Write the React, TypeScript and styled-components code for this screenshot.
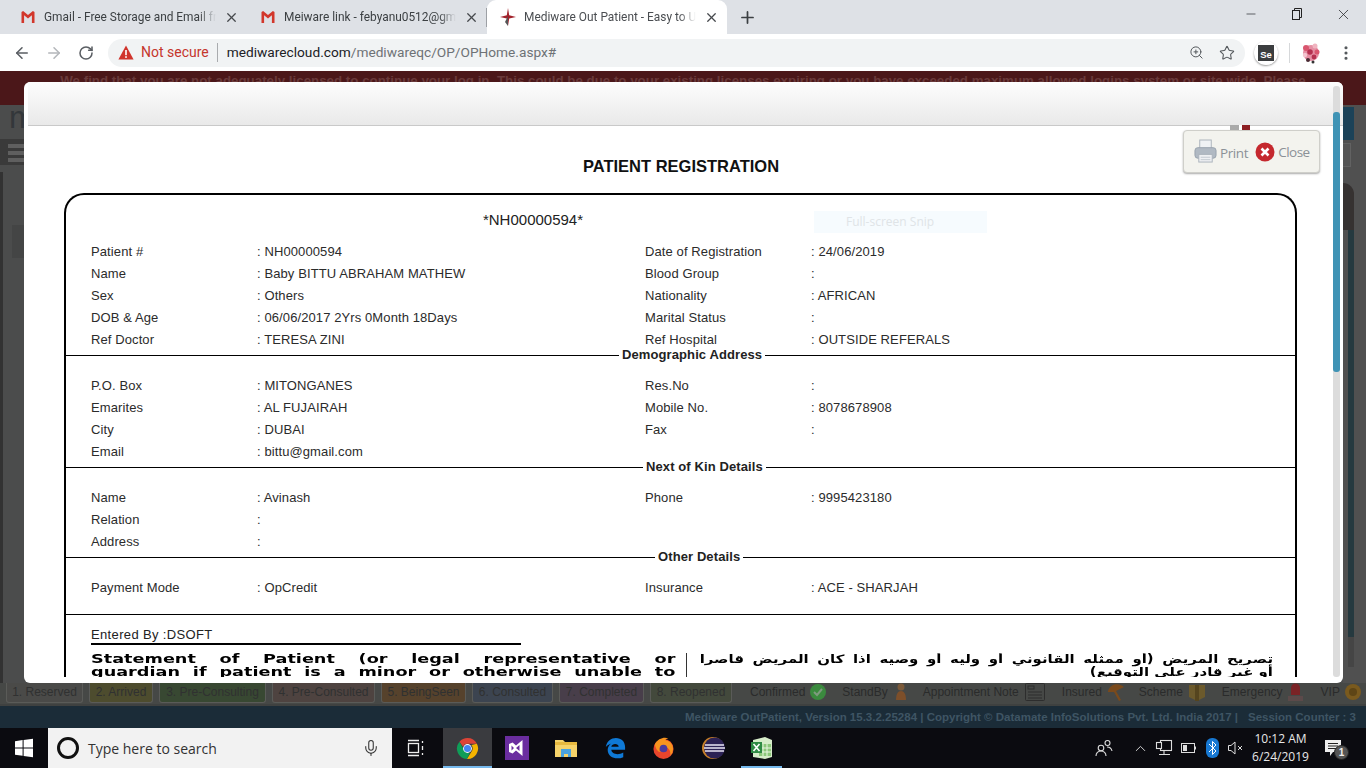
import React from "react";
import styled, { createGlobalStyle } from "styled-components";
import { ArrowLeft, ArrowRight, RotateCw, Plus, X, Minus, Star, ZoomIn, Mic, ChevronUp, MoreVertical } from "lucide-react";

const Global = createGlobalStyle`
  html, body { margin: 0; padding: 0; background: #000; overflow: hidden; }
  * { box-sizing: border-box; }
`;

const Screen = styled.div`
  width: 1366px; height: 768px; display: flex; flex-direction: column; overflow: hidden; position: relative;
  font-family: "Liberation Sans", Arial, sans-serif;
`;

/* ---------- browser chrome ---------- */
const TabStrip = styled.div`
  height: 34px; flex: none; background: #dee1e6; display: flex; align-items: stretch; padding-left: 7px;
`;
const Tab = styled.div<{ $active?: boolean; $sep?: boolean }>`
  width: 240px; display: flex; align-items: center; padding: 0 8px 0 13px; gap: 8px; position: relative;
  font: 11.9px Roboto, sans-serif; color: ${p => (p.$active ? "#4a4d51" : "#3c4043")};
  background: ${p => (p.$active ? "#fff" : "transparent")};
  border-radius: ${p => (p.$active ? "9px 9px 0 0" : "0")};
  ${p => p.$sep && `&::after { content: ""; position: absolute; right: 0; top: 8px; height: 19px; width: 1px; background: #9da0a5; }`}
`;
const TabTitle = styled.span`
  flex: 1; min-width: 0; white-space: nowrap;
  -webkit-mask-image: linear-gradient(90deg, #000 90%, transparent 100%);
  mask-image: linear-gradient(90deg, #000 90%, transparent 100%);
`;
const NewTab = styled.div`
  width: 28px; margin-left: 6px; display: flex; align-items: center; justify-content: center; color: #3c4043;
`;
const WindowControls = styled.div`
  margin-left: auto; display: flex; align-items: flex-start;
`;
const WindowButton = styled.div`
  width: 46px; height: 28px; display: flex; align-items: center; justify-content: center; color: #26282b;
`;

const Toolbar = styled.div`
  height: 37px; flex: none; background: #fff; display: flex; align-items: center; padding-left: 6px;
`;
const NavButton = styled.div<{ $off?: boolean }>`
  width: 32px; display: flex; justify-content: center; color: ${p => (p.$off ? "#b4b7bb" : "#5a5e63")};
`;
const Omnibox = styled.div`
  margin-left: 6px; width: 1137px; height: 28px; border-radius: 14px; background: #f1f3f4;
  display: flex; align-items: center; padding-left: 10px; font: 13.7px/19px Roboto, sans-serif;
`;
const NotSecure = styled.span`
  color: #c5362c; margin-left: 7px; padding-right: 8px; border-right: 1px solid #a9abae; line-height: 19px; font-size: 14px;
`;
const UrlHost = styled.span`
  color: #202124; margin-left: 9px;
`;
const UrlPath = styled.span`
  color: #6e7276;
`;
const OmniIcons = styled.div`
  margin-left: auto; display: flex; align-items: center; gap: 15px; padding-right: 10px; color: #54585c;
`;
const SeBadge = styled.div`
  margin-left: 9px; width: 24px; height: 24px; border-radius: 50%; background: #fff; box-shadow: 0 1px 2px #999;
  display: flex; align-items: center; justify-content: center;
`;
const SeSquare = styled.div`
  width: 16px; height: 16px; background: #3b3d3f; color: #fff; font: bold 9.5px "Liberation Sans", sans-serif;
  display: flex; align-items: flex-end; justify-content: center; line-height: 10px; padding-bottom: 1px;
`;
const ToolDivider = styled.div`
  width: 1px; height: 20px; background: #d6d8da; margin: 0 11px;
`;
const Kebab = styled.div`
  margin-left: 16px; color: #55595d; display: flex;
`;

/* ---------- application behind the dialog (dimmed) ---------- */
const AppArea = styled.div`
  flex: 1; min-height: 0; position: relative; display: flex; flex-direction: column; background: #4b4c4c;
`;
const Banner = styled.div`
  height: 34px; flex: none; background: #4b1719; color: #6a3a3b; font: bold 13.33px "Liberation Sans", sans-serif;
  white-space: nowrap; text-align: center; padding-top: 2px; line-height: 15px; overflow: hidden;
`;
const BackRow = styled.div`
  flex: 1; min-height: 0; display: flex; justify-content: space-between;
`;
const LeftGutter = styled.div`
  width: 24px; display: flex; flex-direction: column;
`;
const LogoLetter = styled.div`
  height: 34px; color: #33373a; font: 32px/24px "Liberation Sans", sans-serif; padding-left: 9px; overflow: hidden; white-space: nowrap;
`;
const MenuBand = styled.div`
  height: 26px; background: #3a3a3a; padding: 5px 0 0 8px; display: flex; flex-direction: column; gap: 3px;
`;
const MenuLine = styled.div`
  height: 4px; background: #5f5f5f;
`;
const LeftBody = styled.div`
  flex: 1; margin-top: 7px; border-left: 3px solid #323232; padding: 53px 0 0 9px;
`;
const LeftBox = styled.div`
  height: 33px; background: #444545;
`;
const RightGutter = styled.div`
  width: 23px; display: flex; flex-direction: column; background: #505050; padding-top: 2px;
`;
const BlueBlock = styled.div`
  width: 11px; height: 33px; background: #1b4258;
`;
const GreyBlock = styled.div`
  width: 8px; height: 24px; margin-top: 3px; background: #555; border: 1px solid #626262; border-left: 0;
`;
const DarkBlock = styled.div`
  width: 11px; height: 47px; margin-top: 16px; background: #363231; border-top-right-radius: 12px;
`;
const TealBlock = styled.div`
  width: 6px; height: 407px; margin-left: 5px; background: #25393f;
`;
const GreyTail = styled.div`
  width: 6px; height: 30px; margin-left: 5px; background: #454545;
`;

const StatusBar = styled.div`
  height: 23px; flex: none; background: #464846; display: flex; align-items: flex-start; padding-left: 6px; gap: 6px;
  border-bottom: 2px solid #3f4140; overflow: hidden;
`;
const Chip = styled.div<{ $w: number; $bg: string }>`
  width: ${p => p.$w}px; height: 20px; flex: none; background: ${p => p.$bg}; border: 1px solid #5a5b58; border-top: 0;
  border-radius: 0 0 3px 3px; color: #303131; font-size: 12px; line-height: 18px; text-align: center; white-space: nowrap;
`;
const Legend = styled.div<{ $gap: number }>`
  flex: none; margin-left: ${p => p.$gap}px; display: flex; align-items: center; gap: 5px; height: 18px;
  color: #2a2b2b; font-size: 12px; white-space: nowrap;
`;
const FooterBar = styled.div`
  height: 22px; flex: none; background: #1b2c38; color: #3f5564; font: bold 11.5px/23px "Liberation Sans", sans-serif;
  display: flex; justify-content: flex-end; padding-right: 10px; gap: 10px; white-space: nowrap;
`;

/* ---------- dialog ---------- */
const Dialog = styled.div`
  position: absolute; left: 24px; top: 11px; width: 1319px; height: 601px; background: #fff; border-radius: 6px;
  overflow: hidden; display: flex; flex-direction: column; padding-bottom: 6px;
`;
const DialogHeader = styled.div`
  height: 44px; flex: none; margin-left: 4px; background: linear-gradient(#fdfdfd, #e9e9e9); border-bottom: 1px solid #c9c9c9;
`;
const ScrollTrack = styled.div`
  position: absolute; right: 3px; top: 4px; bottom: 6px; width: 7px; background: #dcdcdc; border-radius: 3px;
`;
const ScrollThumb = styled.div`
  position: absolute; left: 0; right: 0; top: 26px; height: 260px; background: #3f93b5; border-radius: 3px;
`;
const PrintCard = styled.div`
  position: absolute; left: 1159px; top: 48px; width: 137px; height: 43px; background: #f3f3ee; border: 1px solid #cfcfca;
  border-radius: 4px; box-shadow: 0 1px 2px #aaa; display: flex; align-items: center; padding-left: 10px;
  font: 13.5px "Open Sans", sans-serif; color: #8b9197;
`;
const Nub = styled.div`
  position: absolute; left: 46px; top: -6px; width: 20px; height: 5px;
  background: linear-gradient(90deg, #aaa 0 45%, #fff 45% 58%, #8d1f24 58%);
`;
const PrintLabel = styled.span`
  margin: 3px 0 0 3px; letter-spacing: -0.4px;
`;
const CloseLabel = styled.span`
  margin-left: 3px; letter-spacing: -0.5px;
`;
const CloseIcon = styled.svg`
  margin-left: 7px;
`;
const DialogBody = styled.div`
  flex: 1; min-height: 0; overflow: hidden; padding: 0 46px 0 40px; background: #fff;
`;
const Title = styled.h1`
  margin: 31px 0 0; height: 19px; width: 1234px; text-align: center; font: bold 16.5px/19px "Liberation Sans", sans-serif; color: #111;
`;
const RecordBox = styled.div`
  margin-top: 17px; width: 1233px; border: 2px solid #000; border-bottom: 0; border-radius: 20px 20px 0 0;
`;
const BarcodeRow = styled.div`
  height: 45px; display: flex; position: relative;
`;
const Barcode = styled.div`
  width: 934px; text-align: center; padding-top: 16px; font: 15px/18px "Liberation Sans", sans-serif; color: #222;
`;
const SnipHint = styled.div`
  position: absolute; left: 748px; top: 16px; width: 173px; height: 22px; background: #f6fbfe; color: #dfe4e7;
  font: 12px/22px "Open Sans", sans-serif; padding-left: 32px;
`;
const InfoGrid = styled.div`
  display: grid; grid-template-columns: 166px 388px 166px 1fr; padding-left: 25px; grid-auto-rows: 22px;
  font-size: 13px; line-height: 23px; color: #2b2b2b; letter-spacing: 0.1px;
`;
const Value = styled.div`
  white-space: nowrap;
`;
const Divider = styled.div`
  height: 10px; display: flex; align-items: center; margin-bottom: 14px;
`;
const DividerLine = styled.div<{ $w?: number }>`
  height: 1px; background: #000; ${p => (p.$w ? `width: ${p.$w}px;` : "flex: 1;")}
`;
const DividerLabel = styled.div`
  font: bold 13px/14px "Liberation Sans", sans-serif; color: #222; padding: 0 3px; margin-top: -1px; white-space: nowrap; letter-spacing: 0.1px;
`;
const Rule = styled.div`
  height: 1px; background: #000; margin-top: 16px;
`;
const EnteredBy = styled.div`
  margin: 9px 0 0 25px; width: 430px; height: 21px; border-bottom: 2px solid #000; font-size: 13px; line-height: 22px; color: #222; letter-spacing: 0.35px;
`;
const Statement = styled.div`
  display: grid; grid-template-columns: 621px 1fr; margin-top: 8px;
`;
const StatementLeft = styled.div`
  padding-left: 25px; border-right: 1px solid #333; overflow: hidden;
`;
const StatementEn = styled.div`
  width: 377px; transform: scaleX(1.55); transform-origin: left top; text-align: justify; text-align-last: justify;
  font: bold 11.4px/13px "DejaVu Sans", sans-serif; color: #000;
`;
const StatementArBlock = styled.div`
  margin-left: 12px; width: 574px; overflow: hidden;
`;
const StatementAr = styled.div`
  width: 441px; margin-left: auto; direction: rtl; transform: scaleX(1.3); transform-origin: right top;
  font: bold 11.5px/13px "DejaVu Sans", sans-serif; color: #000;
`;
const ArabicFull = styled.div`
  text-align: justify; text-align-last: justify; white-space: nowrap;
`;

/* ---------- taskbar ---------- */
const Taskbar = styled.div`
  height: 40px; flex: none; background: #0b0b10; display: flex; align-items: stretch; color: #fff;
`;
const StartButton = styled.div`
  width: 48px; display: flex; align-items: center; justify-content: center;
`;
const SearchBox = styled.div`
  width: 344px; background: #f2f2f2; display: flex; align-items: center; padding-left: 9px; color: #333;
  font: 14px "Open Sans", sans-serif;
`;
const CortanaRing = styled.div`
  width: 22px; height: 22px; border: 3px solid #111; border-radius: 50%; margin-right: 9px;
`;
const MicSlot = styled.div`
  margin-left: auto; padding-right: 12px; display: flex; color: #333;
`;
const TaskView = styled.div`
  width: 48px; margin-right: 3px; display: flex; align-items: center; justify-content: center;
`;
const AppSlot = styled.div<{ $active?: boolean; $open?: boolean }>`
  width: 49px; display: flex; align-items: center; justify-content: center; position: relative;
  background: ${p => (p.$active ? "#3a3b3f" : "transparent")};
  ${p => (p.$open || p.$active) && `&::after { content: ""; position: absolute; bottom: 0; left: ${p.$active ? 0 : 4}px; right: ${p.$active ? 0 : 4}px; height: 2px; background: #76b9ed; }`}
`;
const Tray = styled.div`
  margin-left: auto; display: flex; align-items: center; padding-right: 13px;
`;
const TrayIcon = styled.div<{ $after?: number }>`
  width: 24px; display: flex; justify-content: center; margin-right: ${p => p.$after ?? 0}px;
`;
const Clock = styled.div`
  width: 65px; text-align: center; font: 12px/18px "Open Sans", sans-serif; color: #e8e8e8;
`;
const Notify = styled.div`
  width: 40px; display: flex; justify-content: center; position: relative;
`;
const NotifyBadge = styled.div`
  position: absolute; left: 21px; top: 6px; width: 15px; height: 15px; border-radius: 50%; background: #555;
  border: 1px solid #222; font: bold 10px/13px "Liberation Sans", sans-serif; text-align: center; color: #eee;
`;

/* ---------- drawings ---------- */
const GmailIcon = () => (
  <svg width="16" height="16" viewBox="0 0 16 16"><path d="M1.500 14V3l1.600-1L8 6l4.900-4 1.600 1v11h-2.600V6.300L8 9.400 4.100 6.300V14z" fill="#d2372c" /></svg>
);
const MediwareIcon = () => (
  <svg width="16" height="18" viewBox="0 0 16 18"><path d="M8 0l1.200 7.200L16 9l-6.800 1.400L8 18l-1.200-7.600L0 9l6.800-1.800z" fill="#a2222b" /><path d="M8 8v10l-3-4z" fill="#555" /></svg>
);
const WarnIcon = () => (
  <svg width="16" height="15" viewBox="0 0 16 15"><path d="M8 .5L15.600 14.500H.4z" fill="#d0342c" /><rect x="7.200" y="5" width="1.600" height="5.200" fill="#fff" /><rect x="7.200" y="11.200" width="1.600" height="1.700" fill="#fff" /></svg>
);
const RestoreIcon = () => (
  <svg width="12" height="14" viewBox="0 0 12 14" fill="none" stroke="#222" strokeWidth="1"><rect x="1.500" y="3.500" width="7" height="9" /><path d="M3.500 3.500v-2h7v9h-2" /></svg>
);
const Ladybug = () => (
  <svg width="20" height="22" viewBox="0 0 20 22">
    <circle cx="10" cy="11" r="8" fill="#e58ea3" />
    <circle cx="5" cy="6" r="3" fill="#d9566f" /><circle cx="14" cy="4" r="2.500" fill="#f0b4c0" />
    <circle cx="16" cy="10" r="2.500" fill="#d9566f" /><circle cx="9" cy="10" r="2.800" fill="#b5304f" />
    <circle cx="4" cy="13" r="2.200" fill="#f3c4ce" /><circle cx="13" cy="15" r="2.400" fill="#b5304f" />
    <circle cx="7" cy="18" r="2" fill="#4a2a33" /><circle cx="12" cy="20" r="1.500" fill="#333" />
  </svg>
);
const PrinterIcon = () => (
  <svg width="23" height="25" viewBox="0 0 24 26"><rect x="6" y="1" width="12" height="10" fill="#f0f2f5" stroke="#aab2bb" /><rect x="1" y="9" width="22" height="11" rx="3" fill="#b0b9c3" stroke="#98a2ad" /><rect x="5" y="16" width="14" height="8" fill="#eef0f3" stroke="#aab2bb" /><path d="M7 19h10M7 21.500h10" stroke="#c3c9d0" /></svg>
);
const WindowsLogo = () => (
  <svg width="20" height="20" viewBox="0 0 20 20" fill="#fff"><path d="M1 3.200l7.600-1.100v7.300H1zM9.600 2L19 .7v8.700H9.600zM1 10.500h7.600v7.300L1 16.800zM9.600 10.500H19v8.800l-9.400-1.300z" /></svg>
);
const TaskViewIcon = () => (
  <svg width="18" height="18" viewBox="0 0 18 18" fill="none" stroke="#eee" strokeWidth="1.300"><path d="M1 1.500h11M1 16.500h11" /><rect x="1.500" y="4.500" width="10" height="9" /><path d="M15.500 2v2M15.500 7v4M15.500 14v2" /></svg>
);
const ChromeIcon = () => (
  <svg width="23" height="23" viewBox="0 0 24 24"><path d="M12 1a11 11 0 019.800 6H12a5 5 0 00-4.700 3.200L3.600 4.900A11 11 0 0112 1z" fill="#db4437" /><path d="M21.800 7A11 11 0 0111.400 23l4.700-7.700A5 5 0 0016 8.400z" fill="#f4b400" /><path d="M3.600 4.900l4.800 8.300a5 5 0 006.300 3l-3.300 6.800A11 11 0 013.600 4.900z" fill="#0f9d58" /><circle cx="12" cy="12" r="4.600" fill="#fff" /><circle cx="12" cy="12" r="3.700" fill="#4285f4" /></svg>
);
const VsIcon = () => (
  <svg width="24" height="24" viewBox="0 0 24 24"><rect width="24" height="24" fill="#6a2d9f" /><path d="M17.500 4v16l-6.500-5.500-3.400 3L4 16V8l3.600-1.500L11 9.500zM6.500 9.500v5L9 12zM14.500 9l-3.500 3 3.500 3z" fill="#fff" fillRule="evenodd" /></svg>
);
const FolderIcon = () => (
  <svg width="22" height="20" viewBox="0 0 22 20"><path d="M0 2h8l2 2h12v15H0z" fill="#f6d36a" /><path d="M0 4h22v3H0z" fill="#e7b93f" /><path d="M6 11h10v8h-3v-3H9v3H6z" fill="#4aa3df" /></svg>
);
const EdgeIcon = () => (
  <svg width="22" height="22" viewBox="0 0 24 24"><path d="M2 11C3 4 8 1 13 1c6 0 10 4 10 10v3H8c.3 5 8 6 13 3v5c-7 3-17 1-17-8 0-3 2-6 4-7-2.500 1-5 2-6 4zm6-.5h8c0-4-7.500-4-8 0z" fill="#0f79d6" fillRule="evenodd" /></svg>
);
const FirefoxIcon = () => (
  <svg width="23" height="24" viewBox="0 0 24 24"><circle cx="12" cy="13" r="10.500" fill="#e8452c" /><path d="M3 8c3-6 10-8 14-6-2 0-3 1-3 2 4 0 8 4 8 9a10 10 0 01-3 7c1-4-1-8-5-9-2-.5-5 0-6 2s1 3 3 3c-3 1-7-1-8-8z" fill="#f7941e" /><circle cx="12" cy="12.500" r="4" fill="#4a3a9c" /></svg>
);
const EclipseIcon = () => (
  <svg width="24" height="24" viewBox="0 0 24 24"><circle cx="12" cy="12" r="11" fill="#c9812a" /><circle cx="13.500" cy="12" r="10.500" fill="#2c2255" /><path d="M4 9h19M3 12h21M4 15h19" stroke="#e9e6f5" strokeWidth="1.500" /></svg>
);
const ExcelIcon = () => (
  <svg width="24" height="24" viewBox="0 0 24 24"><path d="M3 4l12-3 7 3v17l-7 2-12-2z" fill="#d6ecc9" /><path d="M9 8h12v12H9z" fill="#8cc77a" /><path d="M13 8v12M17 8v12M9 12h12M9 16h12" stroke="#e8f5e0" /><path d="M1 6h11v11H1z" fill="#2f8a44" /><path d="M3.500 8l6 7M9.500 8l-6 7" stroke="#fff" strokeWidth="1.600" /></svg>
);
const PeopleIcon = () => (
  <svg width="18" height="18" viewBox="0 0 18 18" fill="none" stroke="#ddd" strokeWidth="1.100"><circle cx="6" cy="9" r="2.800" /><path d="M1 17c0-3 2-5 5-5s5 2 5 5" /><circle cx="12.500" cy="4" r="2.500" /><path d="M12 8c2.500 0 4.500 1.500 5 4" /></svg>
);
const NetworkIcon = () => (
  <svg width="18" height="18" viewBox="0 0 18 18" fill="none" stroke="#ddd" strokeWidth="1.100"><rect x="5.500" y="1.500" width="11" height="10" /><rect x="1.500" y="3.500" width="5" height="6" fill="#0b0b10" /><path d="M9 11.500v4M4 15.500h11" /></svg>
);
const BatteryIcon = () => (
  <svg width="17" height="12" viewBox="0 0 17 12" fill="none" stroke="#ddd"><rect x="1.500" y="1.500" width="13" height="9" /><rect x="3" y="3" width="4" height="6" fill="#ddd" stroke="none" /><path d="M15.500 4.500v3" /></svg>
);
const BluetoothIcon = () => (
  <svg width="13" height="20" viewBox="0 0 13 20"><rect width="13" height="20" rx="6" fill="#1778d2" /><path d="M3 6l7 7-3.500 3.500v-13L10 7l-7 7" fill="none" stroke="#fff" /></svg>
);
const VolumeIcon = () => (
  <svg width="18" height="14" viewBox="0 0 18 14" fill="none" stroke="#ddd"><path d="M1.500 4.500h2.500l4-3.500v12l-4-3.500H1.500z" /><path d="M11 5l4 4M15 5l-4 4" /></svg>
);
const NotifyIcon = () => (
  <svg width="18" height="18" viewBox="0 0 18 18"><path d="M1 1h16v12H9l-3 4v-4H1z" fill="#eee" /><path d="M4 4.500h10M4 7h10M4 9.500h10" stroke="#222" /></svg>
);
const CheckBadge = () => (
  <svg width="16" height="16" viewBox="0 0 16 16"><circle cx="8" cy="8" r="8" fill="#3b8a3e" /><path d="M4 8l3 3 5-6" fill="none" stroke="#7f9a7f" strokeWidth="2" /></svg>
);
const StandbyIcon = () => (
  <svg width="16" height="18" viewBox="0 0 16 18"><circle cx="8" cy="4" r="3.500" fill="#7b5a3a" /><path d="M3 17c0-6 2-9 5-9s5 3 5 9z" fill="#7d4f2a" /></svg>
);
const NoteIcon = () => (
  <svg width="22" height="20" viewBox="0 0 22 20" fill="none" stroke="#2d2d2d"><rect x="1.500" y="1.500" width="19" height="17" rx="1" /><rect x="4" y="4" width="6" height="3" /><path d="M4 10h14M4 13h14M4 16h14" /></svg>
);
const UmbrellaIcon = () => (
  <svg width="18" height="20" viewBox="0 0 18 20"><path d="M1 9C3 2 11 0 17 5L9 9l5 9-2 1-5-9-6 0z" fill="#7a4a1c" /></svg>
);
const SchemeIcon = () => (
  <svg width="18" height="20" viewBox="0 0 18 20"><path d="M1 3h16v12l-8 4-8-4z" fill="#6c5a2c" /><path d="M7 3h4v16H7z" fill="#55451f" /></svg>
);
const EmergencyIcon = () => (
  <svg width="15" height="19" viewBox="0 0 15 19"><path d="M3 5a4.500 4.500 0 019 0v7H3z" fill="#7a2326" /><rect x="0" y="13" width="15" height="5" fill="#5c4a4a" /></svg>
);
const VipIcon = () => (
  <svg width="16" height="16" viewBox="0 0 16 16"><circle cx="8" cy="8" r="8" fill="#7a5a1e" /><circle cx="8" cy="8" r="4" fill="#5e4516" /></svg>
);

/* ---------- data ---------- */
type Row = [string, string, string?, string?];
const patient: Row[] = [
  ["Patient #", ": NH00000594", "Date of Registration", ": 24/06/2019"],
  ["Name", ": Baby BITTU ABRAHAM MATHEW", "Blood Group", ":"],
  ["Sex", ": Others", "Nationality", ": AFRICAN"],
  ["DOB & Age", ": 06/06/2017 2Yrs 0Month 18Days", "Marital Status", ":"],
  ["Ref Doctor", ": TERESA ZINI", "Ref Hospital", ": OUTSIDE REFERALS"],
];
const address: Row[] = [
  ["P.O. Box", ": MITONGANES", "Res.No", ":"],
  ["Emarites", ": AL FUJAIRAH", "Mobile No.", ": 8078678908"],
  ["City", ": DUBAI", "Fax", ":"],
  ["Email", ": bittu@gmail.com"],
];
const kin: Row[] = [
  ["Name", ": Avinash", "Phone", ": 9995423180"],
  ["Relation", ":"],
  ["Address", ":"],
];
const other: Row[] = [["Payment Mode", ": OpCredit", "Insurance", ": ACE - SHARJAH"]];

const chips: [string, number, string][] = [
  ["1. Reserved", 77, "#4a4a48"],
  ["2. Arrived", 64, "#4d4c2e"],
  ["3. Pre-Consulting", 107, "#384832"],
  ["4. Pre-Consulted", 103, "#4e4340"],
  ["5. BeingSeen", 85, "#56422c"],
  ["6. Consulted", 81, "#3c4450"],
  ["7. Completed", 85, "#483e4a"],
  ["8. Reopened", 82, "#43493c"],
];

const Info = ({ rows }: { rows: Row[] }) => (
  <InfoGrid>
    {rows.map((r, i) => (
      <React.Fragment key={i}>
        <Value>{r[0]}</Value>
        <Value>{r[1]}</Value>
        <Value>{r[2] ?? ""}</Value>
        <Value>{r[3] ?? ""}</Value>
      </React.Fragment>
    ))}
  </InfoGrid>
);

const Section = ({ label, before }: { label: string; before: number }) => (
  <Divider>
    <DividerLine $w={before} />
    <DividerLabel>{label}</DividerLabel>
    <DividerLine />
  </Divider>
);

export default function App() {
  return (
    <Screen>
      <Global />
      <TabStrip>
        <Tab>
          <GmailIcon />
          <TabTitle>Gmail - Free Storage and Email fr</TabTitle>
          <X size={15} color="#45484c" />
        </Tab>
        <Tab $sep>
          <GmailIcon />
          <TabTitle>Meiware link - febyanu0512@gm</TabTitle>
          <X size={15} color="#45484c" />
        </Tab>
        <Tab $active>
          <MediwareIcon />
          <TabTitle>Mediware Out Patient - Easy to U</TabTitle>
          <X size={15} color="#45484c" />
        </Tab>
        <NewTab><Plus size={19} strokeWidth={2.2} /></NewTab>
        <WindowControls>
          <WindowButton><Minus size={14} strokeWidth={1.2} /></WindowButton>
          <WindowButton><RestoreIcon /></WindowButton>
          <WindowButton><X size={17} strokeWidth={1.1} /></WindowButton>
        </WindowControls>
      </TabStrip>
      <Toolbar>
        <NavButton><ArrowLeft size={18} strokeWidth={2.1} /></NavButton>
        <NavButton $off><ArrowRight size={18} strokeWidth={2.1} /></NavButton>
        <NavButton><RotateCw size={16} strokeWidth={2.3} /></NavButton>
        <Omnibox>
          <WarnIcon />
          <NotSecure>Not secure</NotSecure>
          <UrlHost>mediwarecloud.com</UrlHost>
          <UrlPath>/mediwareqc/OP/OPHome.aspx#</UrlPath>
          <OmniIcons>
            <ZoomIn size={15} strokeWidth={1.6} />
            <Star size={16} strokeWidth={1.6} />
          </OmniIcons>
        </Omnibox>
        <SeBadge><SeSquare>Se</SeSquare></SeBadge>
        <ToolDivider />
        <Ladybug />
        <Kebab><MoreVertical size={18} strokeWidth={2.2} /></Kebab>
      </Toolbar>
      <AppArea>
        <Banner>We find that you are not adequately licensed to continue your log in. This could be due to your existing licenses expiring or you have exceeded maximum allowed logins system or site wide. Please</Banner>
        <BackRow>
          <LeftGutter>
            <LogoLetter>m</LogoLetter>
            <MenuBand><MenuLine /><MenuLine /><MenuLine /></MenuBand>
            <LeftBody><LeftBox /></LeftBody>
          </LeftGutter>
          <RightGutter>
            <BlueBlock />
            <GreyBlock />
            <DarkBlock />
            <TealBlock />
            <GreyTail />
          </RightGutter>
        </BackRow>
        <StatusBar>
          {chips.map(([t, w, bg]) => (
            <Chip key={t} $w={w} $bg={bg}>{t}</Chip>
          ))}
          <Legend $gap={12}>Confirmed <CheckBadge /></Legend>
          <Legend $gap={10}>StandBy <StandbyIcon /></Legend>
          <Legend $gap={8}>Appointment Note <NoteIcon /></Legend>
          <Legend $gap={10}>Insured <UmbrellaIcon /></Legend>
          <Legend $gap={8}>Scheme <SchemeIcon /></Legend>
          <Legend $gap={10}>Emergency <EmergencyIcon /></Legend>
          <Legend $gap={12}>VIP <VipIcon /></Legend>
        </StatusBar>
        <FooterBar>
          <span>Mediware OutPatient, Version 15.3.2.25284 | Copyright © Datamate InfoSolutions Pvt. Ltd. India 2017 |</span>
          <span>Session Counter : 3</span>
        </FooterBar>
        <Dialog>
          <DialogHeader />
          <DialogBody>
            <Title>PATIENT REGISTRATION</Title>
            <RecordBox>
              <BarcodeRow>
                <Barcode>*NH00000594*</Barcode>
                <SnipHint>Full-screen Snip</SnipHint>
              </BarcodeRow>
              <Info rows={patient} />
              <Section label="Demographic Address" before={553} />
              <Info rows={address} />
              <Section label="Next of Kin Details" before={577} />
              <Info rows={kin} />
              <Section label="Other Details" before={589} />
              <Info rows={other} />
              <Rule />
              <EnteredBy>Entered By :DSOFT</EnteredBy>
              <Statement>
                <StatementLeft>
                  <StatementEn>Statement of Patient (or legal representative or<br />guardian if patient is a minor or otherwise unable to<br /></StatementEn>
                </StatementLeft>
                <StatementArBlock>
                  <StatementAr>
                    <ArabicFull>تصريح المريض (أو ممثله القانوني أو وليه أو وصيه اذا كان المريض قاصرا</ArabicFull>
                    <div>أو غير قادر على التوقيع)</div>
                  </StatementAr>
                </StatementArBlock>
              </Statement>
            </RecordBox>
          </DialogBody>
          <ScrollTrack><ScrollThumb /></ScrollTrack>
          <PrintCard>
            <Nub />
            <PrinterIcon />
            <PrintLabel>Print</PrintLabel>
            <CloseIcon width="20" height="20" viewBox="0 0 20 20"><circle cx="10" cy="10" r="9.500" fill="#c5282e" /><path d="M6.500 6.500l7 7M13.500 6.500l-7 7" stroke="#fff" strokeWidth="2.600" /></CloseIcon>
            <CloseLabel>Close</CloseLabel>
          </PrintCard>
        </Dialog>
      </AppArea>
      <Taskbar>
        <StartButton><WindowsLogo /></StartButton>
        <SearchBox>
          <CortanaRing />
          Type here to search
          <MicSlot><Mic size={18} strokeWidth={1.4} /></MicSlot>
        </SearchBox>
        <TaskView><TaskViewIcon /></TaskView>
        <AppSlot $active><ChromeIcon /></AppSlot>
        <AppSlot><VsIcon /></AppSlot>
        <AppSlot><FolderIcon /></AppSlot>
        <AppSlot><EdgeIcon /></AppSlot>
        <AppSlot><FirefoxIcon /></AppSlot>
        <AppSlot><EclipseIcon /></AppSlot>
        <AppSlot $open><ExcelIcon /></AppSlot>
        <Tray>
          <TrayIcon $after={12}><PeopleIcon /></TrayIcon>
          <TrayIcon><ChevronUp size={17} strokeWidth={1.3} color="#ddd" /></TrayIcon>
          <TrayIcon><NetworkIcon /></TrayIcon>
          <TrayIcon><BatteryIcon /></TrayIcon>
          <TrayIcon><BluetoothIcon /></TrayIcon>
          <TrayIcon><VolumeIcon /></TrayIcon>
          <Clock>10:12 AM<br />6/24/2019</Clock>
          <Notify><NotifyIcon /><NotifyBadge>1</NotifyBadge></Notify>
        </Tray>
      </Taskbar>
    </Screen>
  );
}
